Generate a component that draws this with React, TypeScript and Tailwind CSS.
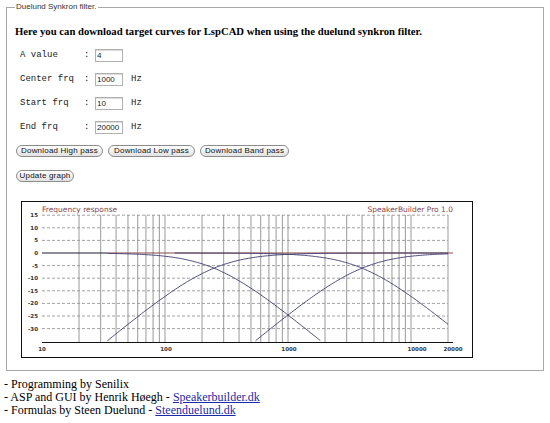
import React from 'react';

const fx = (f: number) => 21 + 123 * Math.log10(f / 10);
const fy = (db: number) => 52 - db * 2.52;

function curve(fn: (f: number) => number, from: number, to: number) {
  const pts: string[] = [];
  for (let i = 0; i <= 200; i++) {
    const f = from * Math.pow(to / from, i / 200);
    const db = fn(f);
    if (db < -35.2) continue;
    pts.push(`${fx(f).toFixed(1)},${fy(db).toFixed(1)}`);
  }
  return 'M' + pts.join(' L');
}

const lp = (fc: number) => (f: number) => -20 * Math.log10(1 + (f / fc) ** 2);
const hp = (fc: number) => (f: number) => -20 * Math.log10(1 + (fc / f) ** 2);

function Chart() {
  const vlines: number[] = [];
  [10, 100, 1000].forEach((d) => {
    for (let m = 2; m <= 10; m++) vlines.push(d * m);
  });
  vlines.push(20000);
  const dbs = [15, 10, 5, -5, -10, -15, -20, -25, -30];
  const labels = [15, 10, 5, 0, -5, -10, -15, -20, -25, -30];

  return (
    <svg width="452" height="157" className="block" style={{ fontFamily: '"DejaVu Sans", Verdana, sans-serif' }}>
      <rect x="0.5" y="0.5" width="451" height="156" fill="#fff" stroke="#111" />
      {vlines.map((f) => (
        <line key={f} x1={fx(f)} x2={fx(f)} y1="14" y2="141.5" stroke="#9a9a9a" strokeWidth="1" />
      ))}
      {dbs.map((d) => (
        <line key={d} x1="21" x2="427" y1={fy(d)} y2={fy(d)} stroke="#8a8a8a" strokeDasharray="3 2" strokeWidth="0.8" />
      ))}
      <line x1="21" x2="432" y1="141.5" y2="141.5" stroke="#111" />
      <line x1="21" x2="86" y1={fy(0)} y2={fy(0)} stroke="#1e1e2e" strokeWidth="1.1" />
      <line x1="86" x2="432" y1={fy(0)} y2={fy(0)} stroke="#8a4848" strokeWidth="1.1" />
      <g fill="none" stroke="#3a3a6e" strokeWidth="0.9">
        <path d={curve(lp(250), 34, 20000)} />
        <path d={curve(hp(250), 34, 20000)} />
        <path d={curve(hp(4000), 34, 20000)} />
        <path d={curve(lp(4000), 120, 20000)} />
      </g>
      <text x="21" y="11" fontSize="7.5" fill="#8a4848">Frequency response</text>
      <text x="432" y="11" fontSize="7.5" fill="#8a4848" textAnchor="end">SpeakerBuilder Pro 1.0</text>
      {labels.map((d) => (
        <text key={d} x="17" y={fy(d) + 2} fontSize="5.5" fontWeight="bold" fill="#333" textAnchor="end">
          {d}
        </text>
      ))}
      {[
        ['10', 21],
        ['100', 145],
        ['1000', 268],
        ['10000', 396],
        ['20000', 432],
      ].map(([t, x]) => (
        <text key={t} x={x} y="150" fontSize="5.5" fontWeight="bold" fill="#333" textAnchor="middle">
          {t}
        </text>
      ))}
    </svg>
  );
}

const rows = [
  { label: 'A value', value: '4', hz: false },
  { label: 'Center frq', value: '1000', hz: true },
  { label: 'Start frq', value: '10', hz: true },
  { label: 'End frq', value: '20000', hz: true },
];

const buttons = [
  { text: 'Download High pass', w: 'w-[87px]' },
  { text: 'Download Low pass', w: 'w-[87px]' },
  { text: 'Download Band pass', w: 'w-[89px]' },
];

const btn =
  'h-[12px] rounded-full border border-[#8c8c8c] bg-gradient-to-b from-white to-[#e2e2e2] text-[8px] leading-[10px] tracking-[0.2px] text-[#111] flex items-center justify-center';

export default function App() {
  return (
    <div className="min-h-screen bg-white text-black">
      <fieldset className="mx-[6px] mt-[2px] border border-[#a8a8a8] pl-[8px] pr-[8px] pb-[12px]">
        <legend className="px-[1px] text-[8px] leading-[10px] text-[#333] font-['Liberation_Sans',Arial,sans-serif]">
          Duelund Synkron filter.
        </legend>
        <h1 className="mt-[13px] text-[10.7px] leading-[13px] font-bold font-['Liberation_Serif','Times_New_Roman',serif]">
          Here you can download target curves for LspCAD when using the duelund synkron filter.
        </h1>

        <div className="mt-[11px] flex flex-col gap-[11px] pl-[5px] font-['Liberation_Mono','Courier_New',monospace] text-[9px] text-[#222]">
          {rows.map((r) => (
            <div key={r.label} className="flex h-[13px] items-center">
              <span className="w-[64px] whitespace-pre">{r.label}</span>
              <span className="w-[11px]">:</span>
              <input
                readOnly
                value={r.value}
                className="h-[13px] w-[28px] border border-[#b0b0b0] px-[1px] text-[8px] leading-[11px] shadow-[inset_0_1px_1px_rgba(0,0,0,0.15)] font-['Liberation_Sans',Arial,sans-serif] outline-none"
              />
              {r.hz && <span className="ml-[8px]">Hz</span>}
            </div>
          ))}
        </div>

        <div className="mt-[11px] flex gap-[5px] pl-[1px] font-['Liberation_Sans',Arial,sans-serif]">
          {buttons.map((b) => (
            <button key={b.text} className={`${btn} ${b.w}`}>
              {b.text}
            </button>
          ))}
        </div>
        <div className="mt-[13px] flex pl-[1px] font-['Liberation_Sans',Arial,sans-serif]">
          <button className={`${btn} w-[58px]`}>Update graph</button>
        </div>

        <div className="mt-[19px] ml-[6px]">
          <Chart />
        </div>
      </fieldset>

      <div className="mt-[7px] pl-[4px] text-[12px] leading-[13px] font-['Liberation_Serif','Times_New_Roman',serif]">
        <div>- Programming by Senilix</div>
        <div>
          - ASP and GUI by Henrik Høegh - <a className="text-[#1c2aa8] underline">Speakerbuilder.dk</a>
        </div>
        <div>
          - Formulas by Steen Duelund - <a className="text-[#1c2aa8] underline">Steenduelund.dk</a>
        </div>
      </div>
    </div>
  );
}
